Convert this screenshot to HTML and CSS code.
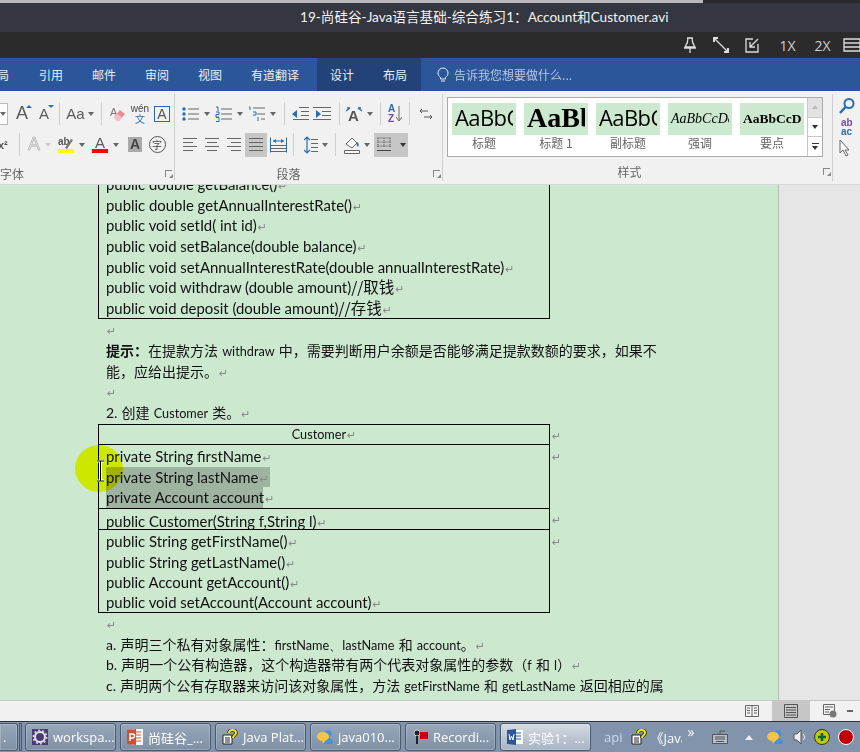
FILE: index.html
```html
<!DOCTYPE html>
<html lang="en">
<head>
    <meta charset="UTF-8">
    <title>19-尚硅谷-Java语言基础-综合练习1：Account和Customer.avi</title>
    <link rel="stylesheet" href="styles.css">
</head>
<body>
<div class="screen">
    <div class="topline"></div>
    <div class="titlebar">19-尚硅谷-Java语言基础-综合练习1：Account和Customer.avi</div>

    <!-- player controls -->
    <div class="playerbar">
        <svg class="pl" width="20" height="20" viewBox="0 0 20 20"><path d="M7 3h6M8 3c0 5-1 6-3 9h10c-2-3-3-4-3-9M4 13h12M10 13v5" fill="none" stroke="#ddd" stroke-width="1.3"/></svg>
        <svg class="pl" width="20" height="20" viewBox="0 0 20 20"><path d="M4 4l12 12" stroke="#ddd" stroke-width="1.3"/><path d="M2 2h5v2H4v3H2zM18 18h-5v-2h3v-3h2z" fill="#ddd"/></svg>
        <svg class="pl" width="20" height="20" viewBox="0 0 20 20"><path d="M11 4H4v13h12V9M16 4l-8 8M8 7v5h5" fill="none" stroke="#ddd" stroke-width="1.3"/></svg>
        <span class="rate">1X</span>
        <span class="rate">2X</span>
        <svg class="pl" width="20" height="20" viewBox="0 0 20 20"><path d="M1 4h16v12H1zM1 8h16M1 12h16" fill="none" stroke="#ddd" stroke-width="1.3"/></svg>
    </div>

    <div class="tabs">
        <span class="tab t-cut">局</span>
        <span class="tab">引用</span>
        <span class="tab">邮件</span>
        <span class="tab">审阅</span>
        <span class="tab">视图</span>
        <span class="tab">有道翻译</span>
        <div class="tab-ctx">
            <span>设计</span>
            <span>布局</span>
        </div>
        <svg class="bulb" width="12" height="16" viewBox="0 0 12 16"><path d="M3.5 10.5C2 9 1 8 1 6a5 5 0 0 1 10 0c0 2-1 3-2.500 4.500v1.500h-5zM4 14h4" fill="none" stroke="#e8eef7" stroke-width="1"/></svg>
        <span class="tell">告诉我您想要做什么...</span>
    </div>

    <div class="ribbon">
        <!-- font group -->
        <div class="group g-font">
            <div class="rows">
                <div class="row">
                    <div class="combo"><i class="caret"></i></div>
                    <span class="tool w22 glyph">A<i class="up"></i></span>
                    <span class="tool w22 glyph small">A<i class="down"></i></span>
                    <i class="sep s4"></i>
                    <span class="tool w30 glyph aa">Aa<i class="caret"></i></span>
                    <i class="sep s6"></i>
                    <span class="tool w22">
                        <svg width="16" height="16" viewBox="0 0 16 16"><text x="0" y="10" class="ic-era">A</text><path d="M4 11l6-7 5 4-6 7H7z" fill="#e98a99"/><path d="M4 11l3-3 5 3-3 4H7z" fill="#f3c0c8"/></svg>
                    </span>
                    <span class="tool w22 wen"><b>wén</b><b class="wen-zh">文</b></span>
                    <span class="tool w22"><span class="a-box">A</span></span>
                </div>
                <div class="row r2 font-r2">
                    <span class="sup">x²</span>
                    <i class="sep s-sup"></i>
                    <span class="tool w32 ghost-tool glyph ghost">A<i class="caret pale"></i></span>
                    <span class="tool w34">
                        <span class="mark-a">
                            <svg width="16" height="12" viewBox="0 0 16 12"><text x="0" y="8" class="ic-ab">ab</text><path d="M7 11l6-9 2 1-6 9z" fill="#777"/></svg>
                            <i class="bar yellow"></i>
                        </span>
                        <i class="caret"></i>
                    </span>
                    <span class="tool w32">
                        <span class="mark-a"><span class="glyph-a">A</span><i class="bar red"></i></span>
                        <i class="caret"></i>
                    </span>
                    <span class="tool w22"><span class="a-gray">A</span></span>
                    <span class="tool w22"><span class="a-circle">字</span></span>
                </div>
            </div>
            <div class="label font-label">字体<i class="launcher"></i></div>
        </div>

        <!-- paragraph group -->
        <div class="group g-para">
            <div class="rows">
                <div class="row">
                    <span class="tool w33">
                        <svg width="18" height="16" viewBox="0 0 18 16"><path d="M6 3h11M6 8h11M6 13h11" stroke="#666"/><circle cx="2" cy="3" r="1.700" fill="#2b6cb0"/><circle cx="2" cy="8" r="1.700" fill="#2b6cb0"/><circle cx="2" cy="13" r="1.700" fill="#2b6cb0"/></svg>
                        <i class="caret"></i>
                    </span>
                    <span class="tool w33">
                        <svg width="18" height="16" viewBox="0 0 18 16"><path d="M6 3h11M6 8h11M6 13h11" stroke="#666"/><path d="M1 1h2v4M1 6h3v2.500H1V11h3M1 11.500h3v4H1" fill="none" stroke="#2b6cb0"/></svg>
                        <i class="caret"></i>
                    </span>
                    <span class="tool w33">
                        <svg width="18" height="16" viewBox="0 0 18 16"><path d="M5 2h12M9 8h8M13 13h4" stroke="#666"/><path d="M1 1h1v3M5 6h3v3H5M10 11v4" fill="none" stroke="#2b6cb0"/></svg>
                        <i class="caret"></i>
                    </span>
                    <i class="sep s-a"></i>
                    <span class="tool w22">
                        <svg width="18" height="14" viewBox="0 0 18 14"><path d="M8 1h10M10 5h8M10 9h8M2 13h16" stroke="#666" transform="translate(0 -.500)"/><path d="M1 7l5-4v8z" fill="#2b6cb0"/></svg>
                    </span>
                    <span class="tool w22">
                        <svg width="18" height="14" viewBox="0 0 18 14"><path d="M0 1h18M0 13h18M9 5h9M9 9h9" stroke="#666" transform="translate(0 -.500)"/><path d="M8 7L3 3v8z" fill="#2b6cb0"/></svg>
                    </span>
                    <i class="sep s-a"></i>
                    <span class="tool w30">
                        <svg width="18" height="16" viewBox="0 0 18 16"><text x="3" y="15" class="ic-a">A</text><path d="M1 5l4-3M17 5l-4-3M5 2H2M13 2h3" fill="none" stroke="#2b6cb0" stroke-width="1.300"/></svg>
                        <i class="caret"></i>
                    </span>
                    <i class="sep s-a"></i>
                    <span class="tool w22 az"><b class="az-a">A</b><b class="az-z">Z</b>
                        <svg width="6" height="16" viewBox="0 0 6 16"><path d="M3 0v14M0 11l3 4 3-4" fill="none" stroke="#666"/></svg>
                    </span>
                    <i class="sep s-b"></i>
                    <span class="tool w22">
                        <svg width="12" height="16" viewBox="0 0 12 16"><path d="M0 5h8M0 5l2-2M0 5l2 2M12 11H4M12 11l-2-2M12 11l-2 2" fill="none" stroke="#555"/></svg>
                    </span>
                </div>
                <div class="row r2">
                    <span class="tool w22"><span class="al al-left"><i></i><i></i><i></i><i></i></span></span>
                    <span class="tool w22"><span class="al al-center"><i></i><i></i><i></i><i></i></span></span>
                    <span class="tool w22"><span class="al al-right"><i></i><i></i><i></i><i></i></span></span>
                    <span class="tool w22 on"><span class="al"><i></i><i></i><i></i><i></i></span></span>
                    <span class="tool w22">
                        <svg width="17" height="16" viewBox="0 0 17 16"><path d="M3 4h11" stroke="#2b6cb0"/><path d="M3 4l3-2v4zM14 4l-3-2v4z" fill="#2b6cb0"/><path d="M1 8.500h15M1 11.500h15M1 14.500h15" stroke="#666"/><path d="M.5 .5v15M16.500 .5v15" stroke="#2b6cb0"/></svg>
                    </span>
                    <i class="sep s4"></i>
                    <span class="tool w33">
                        <svg width="14" height="18" viewBox="0 0 14 18"><path d="M3 2v14M0 4l3-3 3 3M0 14l3 3 3-3" fill="none" stroke="#2b6cb0" stroke-width="1.200"/><path d="M7 3.500h7M7 7.500h7M7 11.500h7M7 15.500h7" stroke="#666"/></svg>
                        <i class="caret"></i>
                    </span>
                    <i class="sep s-c"></i>
                    <span class="tool w33">
                        <svg width="16" height="18" viewBox="0 0 16 18"><path d="M2 8l6-6 5 5-5 5z" fill="#fff" stroke="#666"/><path d="M13 6c2 1 2 4 1 5-1-1-2-3-1-5z" fill="#2b6cb0"/><path d="M.5 14.500h15v3H.5z" fill="#fff" stroke="#666"/></svg>
                        <i class="caret"></i>
                    </span>
                    <span class="tool borders on">
                        <svg width="14" height="16" viewBox="0 0 14 16"><path d="M.5 1h13M.5 5h13M.5 9h13M1 1v10M7 1v10M13 1v10" stroke="#555" stroke-dasharray="1 1" fill="none"/><path d="M0 13.500h14" stroke="#444"/></svg>
                        <i class="caret dark"></i>
                    </span>
                </div>
            </div>
            <div class="label para-label">段落<i class="launcher"></i></div>
        </div>

        <!-- style gallery -->
        <div class="group g-styles">
            <div class="gallery">
                <div class="style-list">
                    <div class="style"><div class="swatch s-title">AaBbCcD</div><span>标题</span></div>
                    <div class="style"><div class="swatch s-h1">AaBbC</div><span>标题 1</span></div>
                    <div class="style"><div class="swatch s-title">AaBbCcD</div><span>副标题</span></div>
                    <div class="style"><div class="swatch s-em">AaBbCcDdEe</div><span>强调</span></div>
                    <div class="style"><div class="swatch s-strong">AaBbCcD</div><span>要点</span></div>
                </div>
                <div class="gallery-scroll">
                    <div class="gs gs-up"><i class="caret up-c"></i></div>
                    <div class="gs"><i class="caret dark"></i></div>
                    <div class="gs gs-more"><i class="more"></i><i class="caret dark"></i></div>
                </div>
            </div>
            <div class="label styles-label">样式<i class="launcher"></i></div>
        </div>

        <!-- editing group, cut off by the window -->
        <div class="group g-edit">
            <svg width="18" height="18" viewBox="0 0 18 18"><circle cx="11" cy="6.500" r="4.500" fill="none" stroke="#2b6cb0" stroke-width="2"/><path d="M7.500 10L2 16" stroke="#2b6cb0" stroke-width="2.500"/></svg>
            <div class="abac"><b>ab</b><b>ac</b></div>
            <svg width="14" height="18" viewBox="0 0 14 18"><path d="M2 1v13l3-3 3 6 2-1-3-5h4z" fill="#fff" stroke="#666"/></svg>
        </div>
    </div>

    <!-- document -->
    <div class="doc">
        <div class="page">
            <div class="content">
                <table class="uml first">
                    <tr><td>
                        public double getBalance()<i class="pm">↵</i><br>
                        public double getAnnualInterestRate()<i class="pm">↵</i><br>
                        public void setId( int id)<i class="pm">↵</i><br>
                        public void setBalance(double balance)<i class="pm">↵</i><br>
                        public void setAnnualInterestRate(double annualInterestRate)<i class="pm">↵</i><br>
                        public void withdraw (double amount)<span class="zh">//取钱</span><i class="pm">↵</i><br>
                        public void deposit (double amount)<span class="zh">//存钱</span><i class="pm">↵</i>
                    </td></tr>
                </table>
                <p class="para"><i class="pm">↵</i></p>
                <p class="para"><b>提示：</b>在提款方法 <span class="latin">withdraw</span> 中，需要判断用户余额是否能够满足提款数额的要求，如果不能，应给出提示。<i class="pm">↵</i></p>
                <p class="para"><i class="pm">↵</i></p>
                <p class="para"><span class="num">2.</span> 创建 <span class="latin">Customer</span> 类。<i class="pm">↵</i></p>
                <table class="uml second">
                    <tr><td class="head">Customer<i class="pm">↵</i></td><th><i class="pm">↵</i></th></tr>
                    <tr>
                        <td class="fields">
                            private String firstName<i class="pm">↵</i><br>
                            <span class="sel sel-1">private String lastName<i class="pm">↵</i></span><br>
                            <span class="sel sel-2">private Account account<i class="pm">↵</i></span>
                        </td>
                        <th><i class="pm">↵</i></th>
                    </tr>
                    <tr><td class="ctor">public Customer(String f,String l)<i class="pm">↵</i></td><th><i class="pm">↵</i></th></tr>
                    <tr>
                        <td class="methods">
                            public String getFirstName()<i class="pm">↵</i><br>
                            public String getLastName()<i class="pm">↵</i><br>
                            public Account getAccount()<i class="pm">↵</i><br>
                            public void setAccount(Account account)<i class="pm">↵</i>
                        </td>
                        <th><i class="pm">↵</i></th>
                    </tr>
                </table>
                <p class="para"><i class="pm">↵</i></p>
                <p class="para"><span class="num">a.</span> 声明三个私有对象属性：<span class="latin">firstName、lastName</span> 和 <span class="latin">account</span>。<i class="pm">↵</i></p>
                <p class="para"><span class="num">b.</span> 声明一个公有构造器，这个构造器带有两个代表对象属性的参数（<span class="latin">f</span> 和 <span class="latin">l</span>）<i class="pm">↵</i></p>
                <p class="para"><span class="num">c.</span> 声明两个公有存取器来访问该对象属性，方法 <span class="latin">getFirstName</span> 和 <span class="latin">getLastName</span> 返回相应的属</p>
            </div>
            <!-- recording highlight and mouse cursor -->
            <div class="spot"></div>
            <svg class="ibeam" width="9" height="22" viewBox="0 0 9 22"><path d="M1 1h7M4.500 1v20M1 21h7" fill="none" stroke="#fff" stroke-width="3"/><path d="M1 1h7M4.500 1v20M1 21h7" fill="none" stroke="#000" stroke-width="1"/></svg>
        </div>
        <div class="side"></div>
    </div>

    <div class="status">
        <svg width="14" height="14" viewBox="0 0 14 14"><path d="M.5 1.500h13v11H.5zM7 1.500v11M2 4h3M2 6.500h3M2 9h3M9 4h3M9 6.500h3M9 9h3" fill="none" stroke="#666"/></svg>
        <span class="view-on"><svg width="14" height="14" viewBox="0 0 14 14"><path d="M.5 .5h13v13H.5zM2 3.500h10M2 6h10M2 8.500h10M2 11h10" fill="none" stroke="#555"/></svg></span>
        <svg class="web" width="14" height="14" viewBox="0 0 14 14"><path d="M.5 .5h11v10H.5zM2 3h8M2 5.500h5M2 8h4" fill="none" stroke="#666"/><circle cx="10" cy="10" r="3.500" fill="#777"/></svg>
        <i class="minus"></i>
    </div>

    <div class="taskbar">
        <div class="btn b-cut">.</div>
        <i class="grip"></i>
        <div class="btn">
            <svg width="16" height="16" viewBox="0 0 16 16"><path d="M0 0h16v16H0z" fill="#4b3a78"/><circle cx="8" cy="8" r="5" fill="none" stroke="#e8e8e8" stroke-width="2"/><circle cx="8" cy="8" r="6.500" fill="none" stroke="#ccc" stroke-dasharray="2 2" stroke-width="2"/></svg>
            <span>workspa...</span>
        </div>
        <div class="btn">
            <svg width="16" height="16" viewBox="0 0 16 16"><path d="M5 0h11v16H5z" fill="#fff"/><path d="M7 3h7M9 6h5M9 9h5M9 12h5" stroke="#d2502d"/><path d="M0 1l9-1v16l-9-1z" fill="#d2502d"/><path d="M3 12V5h2.500a1.500 1.500 0 0 1 0 4H3" fill="none" stroke="#fff" stroke-width="1.500"/></svg>
            <span>尚硅谷_...</span>
        </div>
        <div class="btn">
            <svg class="help" width="16" height="16" viewBox="0 0 16 16"><path d="M1 6h9v9H1z" fill="#fff" stroke="#222"/><path d="M3 9h5M3 11h5M3 13h5" stroke="#222"/><path d="M7 4c0-4 7-4 7 0 0 2-3 2-3 5" fill="none" stroke="#222" stroke-width="3.500"/><path d="M7 4c0-4 7-4 7 0 0 2-3 2-3 5" fill="none" stroke="#ffe600" stroke-width="2"/></svg>
            <span>Java Plat...</span>
        </div>
        <div class="btn">
            <svg width="16" height="16" viewBox="0 0 16 16"><circle cx="11" cy="4.500" r="3.500" fill="#4a90d9"/><path d="M6 15c0-5 2-6 5-6s5 1 5 6z" fill="#4a90d9"/><ellipse cx="6" cy="7.500" rx="6" ry="4.500" fill="#f4c542"/><path d="M5 11l1 4 3-4z" fill="#f4c542"/></svg>
            <span>java010...</span>
        </div>
        <div class="btn">
            <svg width="16" height="16" viewBox="0 0 16 16"><circle cx="5" cy="4" r="3" fill="#222" stroke="#ccc"/><path d="M4 7h2v8H4z" fill="#222"/><path d="M8 3h8v7H8z" fill="#c80000"/></svg>
            <span>Recordi...</span>
        </div>
        <div class="btn active">
            <svg width="16" height="16" viewBox="0 0 16 16"><path d="M5 1h11v14H5z" fill="#fff"/><path d="M9 4h5M9 7h5M9 10h5" stroke="#2b579a"/><path d="M0 1l9-1v16l-9-1z" fill="#2b579a"/><path d="M2 5l1 6 1.500-4L6 11l1-6" fill="none" stroke="#fff"/></svg>
            <span>实验1：...</span>
        </div>
        <div class="tray">
            <span class="api">api</span>
            <svg width="16" height="16" viewBox="0 0 16 16"><path d="M1 6h9v9H1z" fill="#fff" stroke="#222"/><path d="M3 9h5M3 11h5M3 13h5" stroke="#222"/><path d="M7 4c0-4 7-4 7 0 0 2-3 2-3 5" fill="none" stroke="#222" stroke-width="3.500"/><path d="M7 4c0-4 7-4 7 0 0 2-3 2-3 5" fill="none" stroke="#ffe600" stroke-width="2"/></svg>
            <span class="tray-java">《Java</span>
            <span class="chev">»</span>
            <svg class="kbd" width="16" height="14" viewBox="0 0 16 14"><path d="M.5 4.500h15v9H.5z" fill="#b5bfcb" stroke="#555"/><path d="M8 4.500V1h5M3 7h10M3 9h10M4 11.500h8" fill="none" stroke="#555"/></svg>
            <i class="tray-up"></i>
            <svg class="tr-bub" width="16" height="16" viewBox="0 0 16 16"><circle cx="11" cy="4.500" r="3.500" fill="#4a90d9"/><path d="M6 15c0-5 2-6 5-6s5 1 5 6z" fill="#4a90d9"/><ellipse cx="6" cy="7.500" rx="6" ry="4.500" fill="#f4c542"/><path d="M5 11l1 4 3-4z" fill="#f4c542"/></svg>
            <svg class="tr-spk" width="14" height="16" viewBox="0 0 14 16"><path d="M1 5h3l4-4v14l-4-4H1z" fill="#eee" stroke="#555"/><path d="M10 5c2 2 2 4 0 6" fill="none" stroke="#fff"/></svg>
            <svg class="tr-plus" width="16" height="16" viewBox="0 0 16 16"><circle cx="8" cy="8" r="7.500" fill="#c8c800" stroke="#333"/><path d="M8 4v8M4 8h8" stroke="#063" stroke-width="2.500"/></svg>
            <svg class="tr-rec" width="16" height="16" viewBox="0 0 16 16"><circle cx="8" cy="8" r="7.500" fill="#c00000" stroke="#fff"/></svg>
        </div>
    </div>
</div>
</body>
</html>
```

FILE: styles.css
```css
html, body {
    margin: 0;
    padding: 0;
}
body {
    width: 860px;
    height: 752px;
    overflow: hidden;
    font-family: "Noto Sans CJK SC", "Liberation Sans", sans-serif;
}
i {
    font-style: normal;
}
.screen {
    width: 860px;
    height: 752px;
    display: flex;
    flex-direction: column;
}
.topline {
    height: 3px;
    background: linear-gradient(90deg, #b9b9b9 0, #b9b9b9 703px, #2a2a2a 703px);
}

/* video player chrome */
.titlebar {
    height: 29px;
    background: #353740;
    color: #f2f2f2;
    font-size: 13.6px;
    line-height: 28px;
    padding-left: 300px;
    white-space: nowrap;
    font-family: Lato, "Noto Sans CJK SC", sans-serif;
}
.playerbar {
    height: 26px;
    background: #2b2b2b;
    display: flex;
    align-items: center;
    padding-left: 680px;
    overflow: hidden;
}
.pl {
    flex: none;
    margin-right: 11px;
}
.rate {
    flex: none;
    width: 35px;
    color: #cfcfcf;
    font-size: 14px;
    font-family: "Open Sans", sans-serif;
    margin-left: -3px;
    margin-right: 3px;
    text-align: center;
}

/* ribbon tabs */
.tabs {
    height: 33px;
    background: #2b579a;
    color: #e8eef7;
    font-size: 12px;
    display: flex;
    align-items: center;
    white-space: nowrap;
}
.tab {
    margin-right: 29px;
}
.tab:first-child {
    margin-left: -3px;
    margin-right: 30px;
}
.tab-ctx {
    background: #224279;
    align-self: stretch;
    width: 104px;
    margin-left: -11px;
    padding-left: 13px;
    box-sizing: border-box;
    display: flex;
    gap: 29px;
    align-items: center;
}
.bulb {
    margin-left: 16px;
}
.tell {
    margin-left: 5px;
    color: #b8c8e2;
}

/* ribbon */
.ribbon {
    height: 93px;
    background: #f1f1f1;
    border-bottom: 1px solid #d6d6d6;
    display: flex;
    box-sizing: content-box;
    color: #5e5e5e;
}
.group {
    position: relative;
    height: 87px;
    margin-top: 3px;
    border-right: 1px solid #cfcfcf;
    box-sizing: border-box;
    flex: none;
}
.g-font {
    width: 175px;
}
.g-para {
    width: 268px;
}
.g-styles {
    width: 390px;
    padding-left: 4px;
}
.g-edit {
    border: 0;
    width: 27px;
    display: flex;
    flex-direction: column;
    align-items: flex-start;
    padding: 3px 0 0 5px;
    gap: 3px;
}
.rows {
    height: 69px;
    padding-top: 7px;
    box-sizing: border-box;
}
.row {
    display: flex;
    align-items: center;
    height: 25px;
}
.row.r2 {
    margin-top: 6px;
}
.g-para .row {
    padding-left: 4px;
}
.tool {
    display: flex;
    align-items: center;
    justify-content: center;
    gap: 4px;
    height: 24px;
    flex: none;
    position: relative;
}
.w22 {
    width: 22px;
}
.w30 {
    width: 30px;
}
.w32 {
    width: 32px;
}
.w33 {
    width: 33px;
}
.w34 {
    width: 34px;
}
.on {
    background: #c6c6c6;
}
.sep {
    flex: none;
    width: 1px;
    height: 23px;
    background: #cfcfcf;
}
.s4 {
    margin: 0 5px 0 4px;
}
.s6 {
    margin: 0 5px 0 6px;
}
.s-sup {
    margin: 0 6px 0 0;
}
.s-a {
    margin: 0 4px 0 6px;
}
.s-b {
    margin: 0 5px 0 2px;
}
.s-c {
    margin: 0 4px 0 3px;
}
.caret {
    display: inline-block;
    flex: none;
    border-left: 3.5px solid transparent;
    border-right: 3.5px solid transparent;
    border-top: 4px solid #666;
}
.caret.pale {
    border-top-color: #ccc;
}
.caret.dark {
    border-top-color: #333;
}
.caret.up-c {
    border-top: 0;
    border-bottom: 4px solid #bbb;
}
.label {
    text-align: center;
    font-size: 12px;
    line-height: 16px;
    color: #666;
    padding-top: 3px;
    position: relative;
}
.font-label {
    text-align: left;
}
.para-label {
    padding-right: 40px;
}
.styles-label {
    padding-right: 20px;
}
.launcher {
    position: absolute;
    right: 2px;
    top: 7px;
    width: 6px;
    height: 6px;
    border-left: 1px solid #888;
    border-top: 1px solid #888;
}
.launcher::after {
    content: "";
    position: absolute;
    right: -1px;
    bottom: -1px;
    border-left: 4px solid transparent;
    border-bottom: 4px solid #888;
}

/* font group */
.combo {
    width: 8px;
    height: 22px;
    flex: none;
    background: #fff;
    border: 1px solid #bbb;
    border-left: 0;
    box-sizing: border-box;
    margin-right: 3px;
    display: flex;
    align-items: center;
    justify-content: flex-end;
}
.combo .caret {
    margin-right: 1px;
}
.glyph {
    font-family: "Liberation Sans", sans-serif;
    font-size: 18px;
    color: #5a5a5a;
}
.glyph.small {
    font-size: 15px;
}
.glyph.aa {
    font-size: 15px;
    gap: 3px;
}
.glyph.ghost {
    color: #e4e4e4;
    -webkit-text-stroke: .6px #aaa;
}
.up, .down {
    position: absolute;
    right: 1px;
    top: 3px;
    border-left: 3px solid transparent;
    border-right: 3px solid transparent;
}
.up {
    border-bottom: 3px solid #2b6cb0;
}
.down {
    border-top: 3px solid #2b6cb0;
}
.wen {
    flex-direction: column;
    gap: 0;
    line-height: 10px;
    font-weight: normal;
}
.wen b {
    font-weight: normal;
    font-size: 10px;
    font-family: "Liberation Sans", sans-serif;
    color: #444;
}
.wen b.wen-zh {
    color: #2b6cb0;
    font-family: "Noto Sans CJK SC", sans-serif;
}
.a-box {
    width: 14px;
    height: 14px;
    border: 1px solid #2f6aa8;
    font: 14px/14px "Liberation Sans", sans-serif;
    text-align: center;
    color: #555;
}
.ic-era {
    font: 11px "Liberation Sans", sans-serif;
    fill: #777;
}
.ic-ab {
    font: bold 10px "Liberation Sans", sans-serif;
    fill: #555;
}
.font-r2 .tool {
    justify-content: flex-start;
    gap: 5px;
}
.font-r2 .w22 {
    justify-content: center;
}
.ghost-tool {
    padding-left: 2px;
    box-sizing: border-box;
}
.sup {
    flex: none;
    width: 21px;
    margin-left: -2px;
    font: bold 11px "Liberation Sans", sans-serif;
    color: #555;
}
.mark-a {
    display: flex;
    flex-direction: column;
    align-items: center;
    width: 16px;
}
.bar {
    display: block;
    width: 16px;
    height: 4px;
}
.yellow {
    background: #ffff00;
}
.red {
    background: #ff0000;
}
.glyph-a {
    font: 15px/12px "Liberation Sans", sans-serif;
    color: #5a5a5a;
}
.a-gray {
    width: 14px;
    height: 15px;
    background: #aaa;
    font: bold 14px/15px "Liberation Sans", sans-serif;
    color: #444;
    text-align: center;
}
.a-circle {
    width: 15px;
    height: 15px;
    border: 1px solid #555;
    border-radius: 50%;
    font-size: 10px;
    line-height: 15px;
    text-align: center;
    color: #444;
}
.ic-a {
    font: bold 15px "Liberation Sans", sans-serif;
    fill: #555;
}

/* paragraph group */
.az {
    gap: 1px;
}
.az-a, .az-z {
    position: absolute;
    left: 3px;
    font: bold 10px/10px "Liberation Sans", sans-serif;
}
.az-a {
    top: 2px;
    color: #2b6cb0;
}
.az-z {
    top: 12px;
    color: #7a4aa5;
}
.az svg {
    margin-left: 6px;
}
.al {
    display: flex;
    flex-direction: column;
    gap: 3px;
    width: 14px;
}
.al i {
    display: block;
    height: 1px;
    width: 14px;
    background: #666;
}
.al-left i:nth-child(even) {
    width: 10px;
}
.al-center {
    align-items: center;
}
.al-center i:nth-child(even) {
    width: 10px;
}
.al-right {
    align-items: flex-end;
}
.al-right i:nth-child(even) {
    width: 10px;
}
.borders {
    width: 34px;
    gap: 9px;
    margin-left: 1px;
}

/* style gallery */
.gallery {
    width: 376px;
    height: 60px;
    background: #fff;
    border: 1px solid #aaa;
    box-sizing: border-box;
    margin-top: 3px;
    display: flex;
    margin-bottom: 4px;
}
.style-list {
    flex: 1;
    display: flex;
    gap: 8px;
    padding: 5px 0 0 4px;
}
.style {
    width: 64px;
    text-align: center;
    font-size: 12px;
    line-height: 16px;
    color: #666;
}
.swatch {
    height: 32px;
    box-sizing: border-box;
    background: #cce8cf;
    border-right: 3px solid #cce8cf;
    color: #000;
    overflow: hidden;
    white-space: nowrap;
    padding-left: 3px;
    text-align: left;
}
.s-title {
    font: 22px/28px "Open Sans", sans-serif;
    letter-spacing: -.6px;
}
.s-h1 {
    font: bold 28px/30px "Liberation Serif", serif;
}
.s-em {
    font: italic 14px/32px "Liberation Serif", serif;
}
.s-strong {
    font: bold 13.5px/32px "Liberation Serif", serif;
}
.gallery-scroll {
    width: 14px;
    flex: none;
    border-left: 1px solid #c8c8c8;
    display: flex;
    flex-direction: column;
}
.gs {
    flex: 1;
    display: flex;
    flex-direction: column;
    gap: 2px;
    align-items: center;
    justify-content: center;
    border-bottom: 1px solid #c8c8c8;
}
.gs:last-child {
    border-bottom: 0;
}
.gs-up {
    background: #e2e2e2;
}
.more {
    width: 7px;
    height: 1px;
    background: #333;
}
.abac {
    display: flex;
    flex-direction: column;
    line-height: 9px;
    font-size: 10px;
    font-family: "Liberation Sans", sans-serif;
}
.abac b:first-child {
    color: #7a4aa5;
    padding-left: 3px;
}
.abac b:last-child {
    color: #2b6cb0;
    padding-left: 3px;
}

/* document */
.doc {
    flex: 1;
    min-height: 0;
    display: flex;
    overflow: hidden;
}
.page {
    width: 778px;
    flex: none;
    background: #cce8cf;
    position: relative;
    overflow: hidden;
}
.side {
    flex: 1;
    background: #e6e6e6;
    border-left: 1px solid #b8b8b8;
}
.content {
    margin-top: -11.8px;
    padding-left: 98px;
    width: 590px;
    color: #111;
    font-family: Lato, "Noto Sans CJK SC", sans-serif;
    font-size: 14.9px;
    line-height: 20.6px;
}
.uml {
    border-collapse: collapse;
    table-layout: fixed;
    width: 470px;
}
.uml td {
    width: 451px;
    border: 1px solid #000;
    padding: 0 7px;
    box-sizing: border-box;
    line-height: 20.6px;
    white-space: nowrap;
}
.uml th {
    width: 19px;
    padding: 0 0 0 1px;
    font-weight: normal;
    text-align: left;
    vertical-align: top;
    line-height: 20.6px;
}
.uml.first {
    width: 451px;
}
.uml.second {
    margin-top: 1.2px;
}
.uml td.head {
    text-align: center;
    font-size: 12.7px;
    line-height: 19.6px;
}
.uml td.fields {
    padding-top: 1px;
}
.uml td.ctor {
    padding-top: 4px;
    line-height: 16.6px;
}
.uml td.methods {
    padding-top: 1px;
    line-height: 20.2px;
}
.zh {
    font-family: "Noto Sans CJK SC", sans-serif;
    font-size: 15.5px;
    line-height: 0;
}
.pm {
    color: #8a8a8a;
    font-family: "DejaVu Sans", sans-serif;
    font-size: 11px;
    line-height: 0;
    font-style: normal;
    margin-left: 1px;
}
.para {
    margin: 0;
    padding: 0 7px 0 8px;
    width: 575px;
    box-sizing: border-box;
    font-family: "Noto Sans CJK SC", sans-serif;
    font-size: 14px;
    line-height: 20.6px;
    word-spacing: 1px;
    word-break: break-all;
    white-space: normal;
}
.para b {
    font-weight: bold;
    line-height: 0;
}
.latin {
    font-family: Lato, sans-serif;
    font-size: 12.7px;
    line-height: 0;
}
.num {
    font-family: Lato, sans-serif;
    font-size: 14px;
    line-height: 0;
}
.sel {
    background: #9fb3a1;
    display: inline-block;
    height: 20.6px;
    vertical-align: top;
}
.sel-1 {
    width: 164px;
}
.sel-2 {
    width: 157px;
}
.spot {
    position: absolute;
    left: 75px;
    top: 260px;
    width: 48px;
    height: 47px;
    border-radius: 50%;
    background: #ffff00;
    mix-blend-mode: multiply;
}
.ibeam {
    position: absolute;
    left: 96px;
    top: 275px;
}

/* status bar */
.status {
    height: 21px;
    background: #f1f1f1;
    border-top: 1px solid #c8c8c8;
    display: flex;
    align-items: center;
    padding-left: 745px;
    box-sizing: border-box;
}
.view-on {
    margin-left: 13px;
    width: 38px;
    height: 20px;
    background: #c6c6c6;
    display: flex;
    align-items: center;
    justify-content: center;
}
.web {
    margin-left: 13px;
}
.minus {
    width: 6px;
    height: 2px;
    background: #666;
    margin-left: 10px;
}

/* windows taskbar */
.taskbar {
    height: 31px;
    background: #8294ab;
    border-top: 1px solid #2a3340;
    box-sizing: border-box;
    display: flex;
    align-items: center;
    gap: 4px;
    color: #fff;
    font-size: 13px;
    font-family: "Open Sans", "Noto Sans CJK SC", sans-serif;
    white-space: nowrap;
}
.btn {
    flex: none;
    width: 91px;
    height: 28px;
    box-sizing: border-box;
    border: 1px solid #4a5a6e;
    border-radius: 3px;
    background: linear-gradient(#98a7ba, #7f90a6);
    box-shadow: inset 0 0 0 1px rgba(255, 255, 255, .2);
    display: flex;
    align-items: center;
    gap: 5px;
    padding-left: 6px;
    overflow: hidden;
}
.b-cut {
    width: 18px;
    border-left: 0;
    border-radius: 0 3px 3px 0;
    padding-left: 3px;
}
.grip {
    width: 3px;
    height: 28px;
    margin: 0 -1px 0 -3px;
    background: #7d8da3;
    border: 1px solid #4a5a6e;
    box-sizing: border-box;
}
.btn.active {
    background: linear-gradient(#d3dae3, #a7b4c4);
    color: #fff;
}
.tray {
    flex: 1;
    display: flex;
    align-items: center;
    padding-left: 9px;
    position: relative;
    height: 100%;
}
.api {
    color: #cdd9e8;
    margin-right: 9px;
}
.tray-java {
    margin-left: 3px;
    width: 32px;
    overflow: hidden;
    font-size: 13px;
}
.chev {
    font-size: 14px;
    line-height: 10px;
    margin: -10px 0 0 5px;
}
.kbd {
    margin-left: 18px;
}
.tray-up {
    margin-left: 17px;
    border-left: 4px solid transparent;
    border-right: 4px solid transparent;
    border-bottom: 5px solid #eee;
}
.tr-bub {
    margin-left: 14px;
}
.tr-spk {
    margin-left: 10px;
}
.tr-plus {
    margin-left: 7px;
}
.tr-rec {
    margin-left: 8px;
}
```
